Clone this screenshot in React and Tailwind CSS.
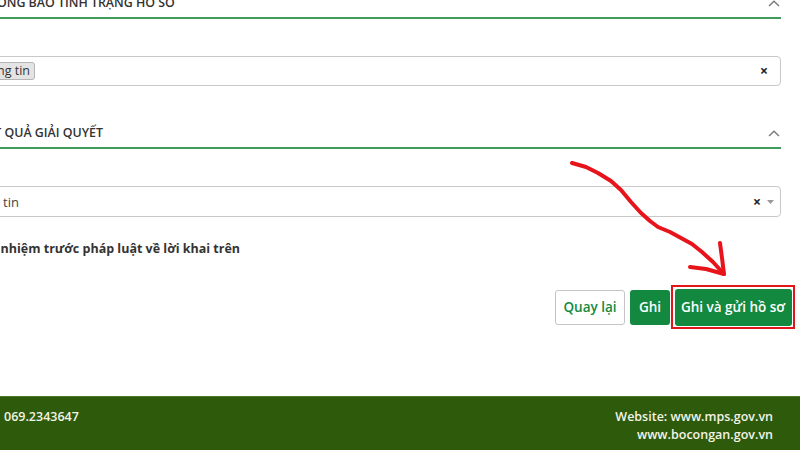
import React from 'react';

const Chevron = () => (
  <svg width="12" height="7" viewBox="0 0 12 7" className="shrink-0 mr-[1px]">
    <path d="M1 6 L6 1.2 L11 6" fill="none" stroke="#7a7a7a" strokeWidth="1.4" />
  </svg>
);

const SectionHeader = ({ title, width }) => (
  <div className="mr-[19px] flex items-center justify-between border-b-2 border-[#3f9d5c] pb-[5px]">
    <div
      className={`-ml-[200px] ${width} shrink-0 text-right whitespace-nowrap text-[12.4px] leading-[18px] font-semibold uppercase text-[#333]`}
    >
      {title}
    </div>
    <Chevron />
  </div>
);

const RedArrow = () => (
  <svg className="absolute inset-0 pointer-events-none" width="800" height="450" viewBox="0 0 800 450">
    <path
      d="M572 163 L586 167 L598 173 L611 181 L621 190 L631 202 L641 213 L650 221 L658 227 L670 232 L681 238 L692 244 L702 252 L713 262 L723 273"
      fill="none"
      stroke="#e8141b"
      strokeWidth="4"
      strokeLinecap="round"
      strokeLinejoin="round"
    />
    <path d="M690 267 L706 269 L724 274" fill="none" stroke="#e8141b" strokeWidth="4" strokeLinecap="round" strokeLinejoin="round" />
    <path d="M720 243 L722 258 L724 274" fill="none" stroke="#e8141b" strokeWidth="4" strokeLinecap="round" strokeLinejoin="round" />
  </svg>
);

export default function App() {
  return (
    <div className="relative w-[800px] h-[450px] overflow-hidden bg-white font-['Open_Sans',sans-serif] text-[#333] flex flex-col">
      <div className="flex flex-col -mt-[6px]">
        <SectionHeader title="Thông báo tình trạng hồ sơ" width="w-[375px]" />

        {/* select 1 */}
        <div className="mt-[37px] -ml-[200px] mr-[19px] h-[30px] flex items-center border border-[#c9c9c9] rounded-[4px] pl-[5px]">
          <div className="flex-1 flex items-center">
            <span className="w-[229px] h-[18px] flex items-center justify-end pr-[4px] whitespace-nowrap bg-[#e4e4e4] border border-[#b5b5b5] rounded-[3px] text-[12.5px] leading-[16px] text-[#333]">
              Không có thông tin
            </span>
          </div>
          <span className="mr-[12px] text-[14px] font-bold leading-none text-[#222]">×</span>
        </div>

        <div className="mt-[38px]">
          <SectionHeader title="Kết quả giải quyết" width="w-[303px]" />
        </div>

        {/* select 2 */}
        <div className="mt-[37px] -ml-[200px] mr-[19px] h-[31px] flex items-center border border-[#c9c9c9] rounded-[4px]">
          <div className="flex-1">
            <div className="w-[218px] text-right whitespace-nowrap text-[13px] leading-[18px] text-[#444]">
              Không có thông tin
            </div>
          </div>
          <span className="mr-[6px] text-[14px] font-bold leading-none text-[#222]">×</span>
          <svg width="7" height="4" viewBox="0 0 7 4" className="mr-[6px]">
            <path d="M0 0 L7 0 L3.5 4 Z" fill="#999" />
          </svg>
        </div>

        {/* commitment */}
        <div className="mt-[23px] -ml-[200px] w-[440px] text-right whitespace-nowrap text-[12.5px] leading-[18px] font-bold text-[#333]">
          Tôi xin chịu trách nhiệm trước pháp luật về lời khai trên
        </div>

        {/* actions */}
        <div className="mt-[27px] mr-[5px] flex justify-end items-center">
          <button className="w-[70px] h-[35px] border border-[#c4c4c4] rounded-[3px] bg-white text-[13.5px] font-semibold text-[#138a40]">
            Quay lại
          </button>
          <button className="ml-[5px] w-[40px] h-[35px] rounded-[3px] bg-[#12893f] text-[13.5px] font-semibold text-white">
            Ghi
          </button>
          <div className="ml-[1px] border-[2.5px] border-[#e0161b] p-[1.5px]">
            <button className="block w-[117px] h-[37px] rounded-[3px] bg-[#12893f] text-[13.5px] font-semibold text-white">
              Ghi và gửi hồ sơ
            </button>
          </div>
        </div>
      </div>

      {/* footer */}
      <footer className="mt-auto h-[54px] bg-[#2d5a0b] border-t border-[#4b7a2c] flex justify-between pl-[4px] pr-[27px] pt-[11px] text-[12.5px] leading-[18px] font-semibold text-[#f3f3e6]">
        <div>069.2343647</div>
        <div className="text-right">
          <div>Website: www.mps.gov.vn</div>
          <div>www.bocongan.gov.vn</div>
        </div>
      </footer>

      <RedArrow />
    </div>
  );
}
